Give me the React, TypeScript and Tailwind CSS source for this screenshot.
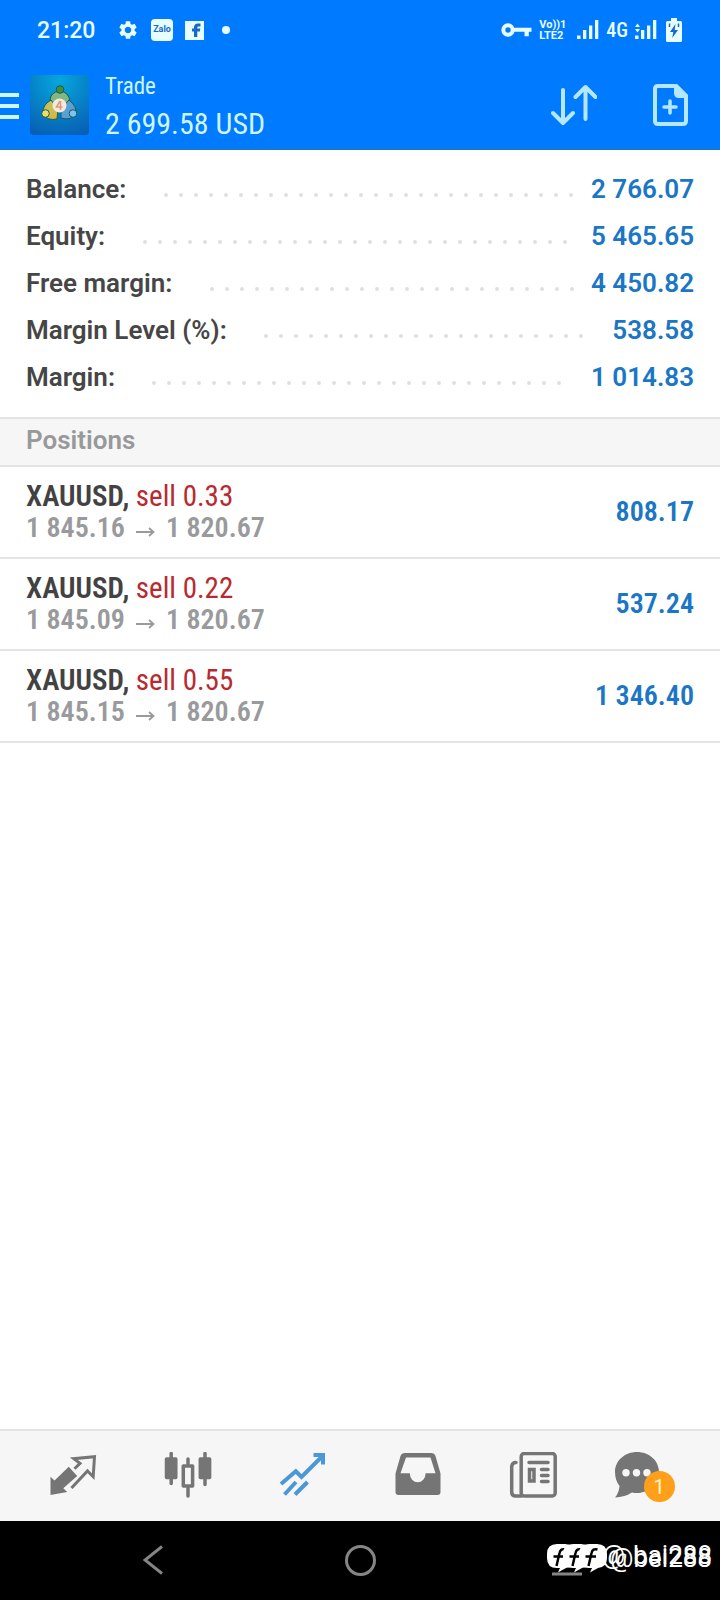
import type { ReactNode } from "react";
import { MdSettings } from "react-icons/md";

type Position = {
  id: number;
  symbol: string;
  side: string;
  volume: string;
  open: string;
  current: string;
  profit: string;
};

const summary = [
  { label: "Balance:", value: "2 766.07" },
  { label: "Equity:", value: "5 465.65" },
  { label: "Free margin:", value: "4 450.82" },
  { label: "Margin Level (%):", value: "538.58" },
  { label: "Margin:", value: "1 014.83" },
];

const positions: Position[] = [
  { id: 1, symbol: "XAUUSD", side: "sell", volume: "0.33", open: "1 845.16", current: "1 820.67", profit: "808.17" },
  { id: 2, symbol: "XAUUSD", side: "sell", volume: "0.22", open: "1 845.09", current: "1 820.67", profit: "537.24" },
  { id: 3, symbol: "XAUUSD", side: "sell", volume: "0.55", open: "1 845.15", current: "1 820.67", profit: "1 346.40" },
];

const SignalIcon = ({ data }: { data?: boolean }) => (
  <svg width="22" height="20" viewBox="0 0 22 20" fill="currentColor">
    {data ? <path d="M0 7 2.500 3.500 5 7zM0 9h5L2.500 12.500z" /> : null}
    <path d="M0 15.500h3.500V19H0zM6 10h3.300v9H6zM12 5.500h3.300V19H12zM18 0h3.300v19H18z" />
  </svg>
);

const StatusBar = () => (
  <div className="flex h-15 items-center pr-[38px] pl-[37px] text-[#e6feff]">
    <span className="w-[80px] pt-[2px] text-[23px] font-medium">21:20</span>
    <MdSettings className="mr-3 size-[22px]" />
    <div className="mr-3 flex h-[22px] w-[22px] items-center justify-center rounded-[4px] bg-[#e6feff] text-[9px] font-bold text-[#1668c9]">
      Zalo
    </div>
    <svg className="mr-[18px]" width="19" height="19" viewBox="0 0 19 19">
      <path d="M0 0h19v19H0z" fill="#e6feff" />
      <path d="M9 16v-5.500H7v-3h2V6.500C9 4 10.500 2.600 13 2.600h2.500v3h-1.800c-1 0-1.400.5-1.400 1.400v.5h3l-.4 3h-2.600V16z" fill="#1668c9" />
    </svg>
    <span className="size-2 rounded-full bg-[#e6feff]" />
    <svg className="mr-[7px] ml-auto" width="31" height="16" viewBox="0 0 31 16">
      <circle cx="7" cy="8" r="4.700" fill="none" stroke="#e6feff" strokeWidth="4" />
      <path d="M12 5.800h18.500v4h-2.700v4.400h-4.300V9.800H12z" fill="#e6feff" />
    </svg>
    <div className="mr-3 w-[26px] text-[11px] leading-[11px] font-bold">
      <div className="flex justify-between">
        <span>Vo))</span>
        <span>1</span>
      </div>
      <div>LTE2</div>
    </div>
    <SignalIcon />
    <span className="mx-[7px] font-[Roboto_Condensed,Liberation_Sans_Narrow,Roboto,sans-serif] text-xl font-medium">4G</span>
    <SignalIcon data />
    <svg className="ml-[9px]" width="16" height="24" viewBox="0 0 16 24">
      <path d="M5 0h6v3h3.500Q16 3 16 4.500v18Q16 24 14.500 24h-13Q0 24 0 22.500v-18Q0 3 1.500 3H5z" fill="#e6feff" />
      <path d="M9.500 6 4 14h3.300L6.200 20 12 12H8.700z" fill="#1668c9" />
      <path d="M3.500 5.500v3.500M12.500 5.500v3.500" stroke="#1668c9" strokeWidth="1.500" />
    </svg>
  </div>
);

const AppLogo = () => (
  <svg className="mr-4 ml-[11px] shrink-0" width="59" height="60" viewBox="0 0 59 60">
    <defs>
      <radialGradient id="tile" cx="50%" cy="10%" r="95%">
        <stop offset="0" stopColor="#06a7dd" />
        <stop offset="1" stopColor="#0760b4" />
      </radialGradient>
      <linearGradient id="gold" x1="0" y1="0" x2="1" y2="1">
        <stop offset="0" stopColor="#b7c774" />
        <stop offset="1" stopColor="#d9b834" />
      </linearGradient>
    </defs>
    <rect width="59" height="60" rx="4" fill="url(#tile)" />
    <g stroke="#1c5a55" strokeWidth="1">
      <path d="M20 26Q20 17 30 16Q39 17 40 27L35 31H24Z" fill="#7fb884" />
      <circle cx="30" cy="14.500" r="3.800" fill="#3f8f3f" />
      <path d="M21 25Q12 30 13 39Q17 46 27 44L28 34Z" fill="url(#gold)" />
      <path d="M39 25Q47 31 46 39Q41 46 31 43L31 34Z" fill="#5aa0d6" />
      <circle cx="15.500" cy="38.500" r="3.800" fill="#f2dc67" />
      <circle cx="43" cy="38.500" r="3.800" fill="#7dc3f0" />
    </g>
    <circle cx="29.500" cy="30.500" r="7" fill="#f7e8dc" />
    <path d="M30 26 26.500 32h6M30.500 26v9" stroke="#d99a80" strokeWidth="1.500" fill="none" />
  </svg>
);

const Header = () => (
  <header className="border-b border-[#2a72b5] bg-[#007aff]">
    <StatusBar />
    <div className="flex h-[89px] items-center pr-8 text-[#cdf6ff]">
      <button aria-label="Menu" className="flex w-[19px] shrink-0 flex-col gap-[7px] pt-[2px]">
        <span className="h-1 bg-current" />
        <span className="h-1 bg-current" />
        <span className="h-1 bg-current" />
      </button>
      <AppLogo />
      <div className="font-[Roboto_Condensed,Liberation_Sans_Narrow,Roboto,sans-serif]">
        <h1 className="text-[23px] leading-[38px]">Trade</h1>
        <div className="text-[30px] leading-9">2 699.58 USD</div>
      </div>
      <button aria-label="Sort" className="ml-auto text-[#b5e8ff]">
        <svg width="46" height="42" viewBox="0 0 46 42" fill="none" stroke="currentColor" strokeWidth="4" strokeLinecap="round" strokeLinejoin="round">
          <path d="M12 6v33M2 29l10 10 10-10M34.500 35V3M24.500 13l10-10 10 10" />
        </svg>
      </button>
      <button aria-label="New order" className="ml-14 text-[#b5e8ff]">
        <svg width="35" height="42" viewBox="0 0 35 42" fill="none" stroke="currentColor" strokeWidth="4" strokeLinejoin="round">
          <path d="M5 2h18l10 10v25q0 3-3 3H5q-3 0-3-3V5q0-3 3-3z" />
          <path d="M23 2v7q0 3 3 3h7z" fill="currentColor" />
          <path d="M17 17v12M11 23h12" strokeWidth="3.500" strokeLinecap="round" />
        </svg>
      </button>
    </div>
  </header>
);

// only whole dots are shown, the ones that wrap are hidden
const DotLeader = () => (
  <div className="mt-[10px] mr-[11px] ml-8 flex h-1 flex-1 flex-wrap overflow-hidden">
    {Array.from({ length: 45 }, (_, i) => (
      <span key={i} className="flex h-1 w-[15px] justify-center">
        <span className="size-1 rounded-full bg-[#e0e0e2]" />
      </span>
    ))}
  </div>
);

const SummaryRow = ({ label, value }: { label: string; value: string }) => (
  <div className="flex h-[47px] items-center text-[26px] font-semibold">
    <dt className="text-[#464646]">{label}</dt>
    <DotLeader />
    <dd className="text-[#1b76c5]">{value}</dd>
  </div>
);

const PositionRow = ({ position }: { position: Position }) => (
  <li className="flex h-[92px] items-center justify-between border-b-2 border-[#e3e3e3] px-[26px] font-[Roboto_Condensed,Liberation_Sans_Narrow,Roboto,sans-serif] text-[28px] leading-8">
    <div>
      <div className="text-[29px] text-[#b82a2f]">
        <span className="font-semibold text-[#424242]">{position.symbol},</span> {position.side} {position.volume}
      </div>
      <div className="flex items-center font-semibold text-[#999a9c]">
        {position.open}
        <svg className="mx-[11px] mt-2" width="19" height="10" viewBox="0 0 19 10" fill="none" stroke="currentColor" strokeWidth="1.800">
          <path d="M0 5h17M13 1l4.500 4L13 9" />
        </svg>
        {position.current}
      </div>
    </div>
    <span className="font-semibold text-[#1b76c5]">{position.profit}</span>
  </li>
);

const NavButton = ({ label, active, children }: { label: string; active?: boolean; children: ReactNode }) => (
  <button aria-label={label} className={active ? "flex justify-center text-[#4b98d8]" : "flex justify-center text-[#757575]"}>
    {children}
  </button>
);

const BottomNav = () => (
  <nav className="grid h-[92px] grid-cols-6 items-center border-t-2 border-[#e3e3e3] bg-[#f6f6f6] px-[15px]">
    <NavButton label="Quotes">
      <svg width="48" height="48" viewBox="0 0 48 48">
        <path d="M1.500 24.700 5.500 28.500 19.800 14.700 28.200 24 14.300 36.300 18.200 40 1.500 43z" fill="currentColor" />
        <path d="M25.500 16.700 31 11.300 24.800 6.700 45.500 4.700 44.200 24.700 38.500 19 22.500 36" fill="none" stroke="currentColor" strokeWidth="3" />
      </svg>
    </NavButton>
    <NavButton label="Chart">
      <svg width="48" height="48" viewBox="0 0 48 48" fill="currentColor" stroke="currentColor" strokeWidth="3.500" strokeLinecap="round" strokeLinejoin="round">
        <path d="M7.200 1.500v30M41 1.500v31M24 7v5M24 36v8" />
        <path d="M2.500 7h9.300v18.500H2.500zM36.300 7h9.300v18.500h-9.300z" />
        <path d="M19.300 14h9.300v20h-9.300z" fill="none" />
      </svg>
    </NavButton>
    <NavButton label="Trade" active>
      <svg width="48" height="48" viewBox="0 0 48 48" fill="none" stroke="currentColor" strokeWidth="4">
        <path d="M2 32 16.800 19.300 22.500 25 43.500 4M34.500 3h9.500v9.500M5.500 42.500 17 30M16 42.500 28.500 30" />
      </svg>
    </NavButton>
    <NavButton label="History">
      <svg width="48" height="48" viewBox="0 0 48 48" fill="currentColor">
        <path
          fillRule="evenodd"
          d="M11 1h26q3.500 0 4.500 3l5 17.500V40q0 3-3 3h-39q-3 0-3-3V21.500L6.500 4q1-3 4.500-3zM12 5.500 6.500 21.300h9.300a7.900 9 0 0 0 15.800 0h9.900L36.500 5.500z"
        />
      </svg>
    </NavButton>
    <NavButton label="News">
      <svg width="48" height="48" viewBox="0 0 48 48" fill="none" stroke="currentColor" strokeWidth="3.500" strokeLinecap="round">
        <rect x="12.200" y="1.500" width="34" height="42.500" rx="3" />
        <path d="M7 10.500q-4 0-4.300 4V40q0 4 4 4h6M20 10.500h19M32.500 17.500H39M32.500 23.500H39M32.500 29.500H39" />
        <path d="M20.500 17.500h4.500v11.500h-4.500z" />
      </svg>
    </NavButton>
    <NavButton label="Messages">
      <span className="relative h-12 w-[66px]">
        <svg width="48" height="48" viewBox="0 0 48 48">
          <path d="M22 0C34 0 44 8.500 44 20S34 41 22 41q-2.500 0-5-.5Q10 45 0 45.500 4 41 4.500 34 0 28 0 20C0 8.500 10 0 22 0z" fill="currentColor" />
          <circle cx="11" cy="20.700" r="3.700" fill="#f6f6f6" />
          <circle cx="21.500" cy="20.700" r="3.700" fill="#f6f6f6" />
          <circle cx="32" cy="20.700" r="3.700" fill="#f6f6f6" />
        </svg>
        <span className="absolute top-[19px] left-[29px] flex size-[31px] items-center justify-center rounded-full bg-[#ff9f1a] text-xl text-[#fff3c4]">
          1
        </span>
      </span>
    </NavButton>
  </nav>
);

const Bubble = () => (
  <svg width="28" height="29" viewBox="0 0 28 29">
    <path d="M10 0h8q10 0 10 10v4q0 9-9 10L11 28.500l2-4.500h-3Q0 24 0 14v-4Q0 0 10 0z" fill="#fff" />
    <path d="M18.500 5.500q-5-1.500-6 3.500L9.500 22M6.500 12.500H17" stroke="#000" strokeWidth="2.500" fill="none" />
  </svg>
);

const SystemBar = () => (
  <div className="relative flex h-[79px] items-center bg-black text-[#858585]">
    <div className="grid flex-1 grid-cols-3">
      <button aria-label="Back" className="flex justify-end pr-[77px]">
        <svg width="20" height="30" viewBox="0 0 20 30" fill="none" stroke="currentColor" strokeWidth="3">
          <path d="M19 1.500 2 15l17 13.500" />
        </svg>
      </button>
      <button aria-label="Home" className="flex justify-center">
        <span className="size-[31px] rounded-full border-3 border-current" />
      </button>
      <button aria-label="Recent apps" className="flex items-center pl-[71px]">
        <svg width="31" height="31" viewBox="0 0 31 31" fill="none" stroke="currentColor" strokeWidth="3">
          <path d="M1 4h29M1 16h29M1 29h30" />
        </svg>
      </button>
    </div>
    <div className="absolute top-[18px] right-2 flex gap-2 font-[Roboto,sans-serif] text-[26px] leading-8 text-white">
      <span>@</span>
      <span>bai288</span>
    </div>
    <div className="absolute top-[21px] right-2 font-[Roboto,sans-serif] text-[26px] leading-8 text-white">@bei288</div>
    <div className="absolute top-[23px] right-[113px] flex -space-x-3">
      <Bubble />
      <Bubble />
      <Bubble />
    </div>
  </div>
);

export default function App() {
  return (
    <div className="flex min-h-screen flex-col bg-white font-[Roboto,sans-serif]">
      <Header />
      <main className="flex-1">
        <dl className="px-[26px] pt-4 pb-4">
          {summary.map((row) => (
            <SummaryRow key={row.label} label={row.label} value={row.value} />
          ))}
        </dl>
        <h2 className="flex h-[50px] items-center border-y-2 border-[#e3e3e3] bg-[#f6f6f6] px-[26px] pb-1 text-[26px] font-semibold text-[#98999b]">
          Positions
        </h2>
        <ul>
          {positions.map((position) => (
            <PositionRow key={position.id} position={position} />
          ))}
        </ul>
      </main>
      <BottomNav />
      <SystemBar />
    </div>
  );
}
